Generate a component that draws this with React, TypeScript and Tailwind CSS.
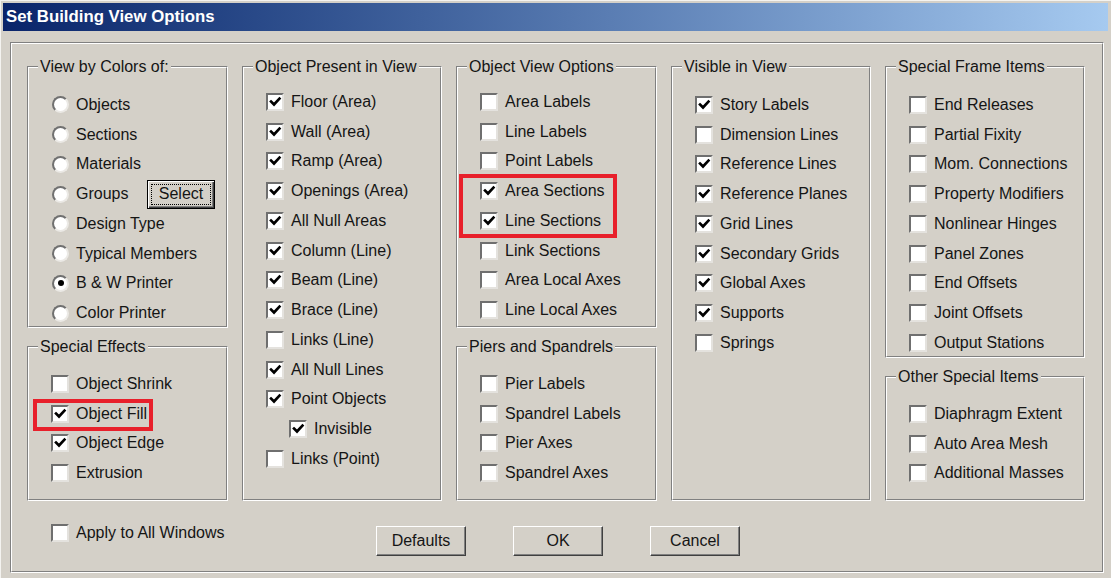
import React from "react";

const FONT = { fontFamily: '"Liberation Sans", Arial, sans-serif' };

function Etched({ className = "", children }: { className?: string; children?: React.ReactNode }) {
  return (
    <div className={`border border-t-[#808080] border-l-[#808080] border-r-white border-b-white ${className}`}>
      <div className="h-full border border-t-white border-l-white border-r-[#808080] border-b-[#808080]">{children}</div>
    </div>
  );
}

function Group({ title, h, pt, children }: { title: string; h: string; pt: string; children?: React.ReactNode }) {
  return (
    <div className={`relative ${h}`}>
      <Etched className="h-full">
        <div className={`flex flex-col ${pt}`}>{children}</div>
      </Etched>
      <span className="absolute -top-[9px] left-[11px] px-[2px] bg-[#d4d0c8] leading-[20px] whitespace-nowrap">{title}</span>
    </div>
  );
}

function Box({ checked }: { checked?: boolean }) {
  return (
    <span className="w-[18px] h-[18px] shrink-0 bg-white border-2 border-t-[#6f6f6f] border-l-[#6f6f6f] border-r-[#e4e2de] border-b-[#e4e2de] flex">
      {checked && (
        <svg viewBox="0 0 14 14" className="w-[14px] h-[14px]">
          <path d="M3 6.5 L6 9.5 L11.5 3.5" fill="none" stroke="#000" strokeWidth="2.6" strokeLinecap="square" />
        </svg>
      )}
    </span>
  );
}

function Check({ label, checked, indent = "pl-[22px]" }: { label: string; checked?: boolean; indent?: string }) {
  return (
    <div className={`h-[29.75px] flex items-center gap-[7px] ${indent}`}>
      <Box checked={checked} />
      <span className="whitespace-nowrap">{label}</span>
    </div>
  );
}

function Radio({ label, checked, children }: { label: string; checked?: boolean; children?: React.ReactNode }) {
  return (
    <div className="h-[29.75px] flex items-center pl-[23px]">
      <span className="w-[17px] h-[17px] shrink-0 rounded-full bg-white border-2 border-t-[#707070] border-l-[#707070] border-r-[#ebe9e5] border-b-[#ebe9e5] flex items-center justify-center">
        {checked && <span className="w-[6px] h-[6px] rounded-full bg-black" />}
      </span>
      <span className={`ml-[7px] whitespace-nowrap ${children ? "w-[71px]" : ""}`}>{label}</span>
      {children}
    </div>
  );
}

function Button({ label }: { label: string }) {
  return (
    <div className="w-[90px] h-[30px] flex items-center justify-center bg-[#d4d0c8] border border-t-white border-l-white border-r-[#404040] border-b-[#404040] shadow-[inset_-1px_-1px_0_#808080]">
      {label}
    </div>
  );
}

export default function App() {
  return (
    <div style={FONT} className="w-[1111px] h-[578px] bg-[#d4d0c8] text-[16px] text-[#151515] relative overflow-hidden border-l border-t border-l-[#f4f3f0] border-t-[#f4f3f0] pl-[2px] pt-[2px] pr-[3px]">
      {/* title bar */}
      <div className="h-[28px] bg-linear-to-r from-[#0a246a] to-[#a6caf0] flex items-center pl-[3px]">
        <span className="text-white font-bold text-[16.8px] leading-none">Set Building View Options</span>
      </div>

      <div className="pt-[11px] pl-[7px] pr-[4px]">
        <Etched className="h-[531px]">
          <div className="pt-[22px] pl-[15px]">
            <div className="grid grid-cols-[201px_200px_201px_200px_200px] gap-x-[14px]">
              {/* column 1 */}
              <div className="flex flex-col gap-[18px]">
                <Group title="View by Colors of:" h="h-[262px]" pt="pt-[22px]">
                  <Radio label="Objects" />
                  <Radio label="Sections" />
                  <Radio label="Materials" />
                  <Radio label="Groups">
                    <div className="w-[68px] h-[29px] border border-black bg-[#d4d0c8] p-[3px] shadow-[inset_1px_1px_0_#fff,inset_-1px_-1px_0_#404040,inset_-2px_-2px_0_#808080]">
                      <div className="w-full h-full border border-dotted border-black flex items-center justify-center">Select</div>
                    </div>
                  </Radio>
                  <Radio label="Design Type" />
                  <Radio label="Typical Members" />
                  <Radio label="B & W Printer" checked />
                  <Radio label="Color Printer" />
                </Group>
                <Group title="Special Effects" h="h-[155px]" pt="pt-[21px]">
                  <Check label="Object Shrink" />
                  <Check label="Object Fill" checked />
                  <Check label="Object Edge" checked />
                  <Check label="Extrusion" />
                </Group>
              </div>

              {/* column 2 */}
              <div className="flex flex-col">
                <Group title="Object Present in View" h="h-[435px]" pt="pt-[19px]">
                  <Check label="Floor (Area)" checked />
                  <Check label="Wall (Area)" checked />
                  <Check label="Ramp (Area)" checked />
                  <Check label="Openings (Area)" checked />
                  <Check label="All Null Areas" checked />
                  <Check label="Column (Line)" checked />
                  <Check label="Beam (Line)" checked />
                  <Check label="Brace (Line)" checked />
                  <Check label="Links (Line)" />
                  <Check label="All Null Lines" checked />
                  <Check label="Point Objects" checked />
                  <Check label="Invisible" checked indent="pl-[45px]" />
                  <Check label="Links (Point)" />
                </Group>
              </div>

              {/* column 3 */}
              <div className="flex flex-col gap-[18px]">
                <Group title="Object View Options" h="h-[262px]" pt="pt-[19px]">
                  <Check label="Area Labels" />
                  <Check label="Line Labels" />
                  <Check label="Point Labels" />
                  <Check label="Area Sections" checked />
                  <Check label="Line Sections" checked />
                  <Check label="Link Sections" />
                  <Check label="Area Local Axes" />
                  <Check label="Line Local Axes" />
                </Group>
                <Group title="Piers and Spandrels" h="h-[155px]" pt="pt-[21px]">
                  <Check label="Pier Labels" />
                  <Check label="Spandrel Labels" />
                  <Check label="Pier Axes" />
                  <Check label="Spandrel Axes" />
                </Group>
              </div>

              {/* column 4 */}
              <div className="flex flex-col">
                <Group title="Visible in View" h="h-[435px]" pt="pt-[22px]">
                  <Check label="Story Labels" checked />
                  <Check label="Dimension Lines" />
                  <Check label="Reference Lines" checked />
                  <Check label="Reference Planes" checked />
                  <Check label="Grid Lines" checked />
                  <Check label="Secondary Grids" checked />
                  <Check label="Global Axes" checked />
                  <Check label="Supports" checked />
                  <Check label="Springs" />
                </Group>
              </div>

              {/* column 5 */}
              <div className="flex flex-col gap-[18px]">
                <Group title="Special Frame Items" h="h-[292px]" pt="pt-[22px]">
                  <Check label="End Releases" />
                  <Check label="Partial Fixity" />
                  <Check label="Mom. Connections" />
                  <Check label="Property Modifiers" />
                  <Check label="Nonlinear Hinges" />
                  <Check label="Panel Zones" />
                  <Check label="End Offsets" />
                  <Check label="Joint Offsets" />
                  <Check label="Output Stations" />
                </Group>
                <Group title="Other Special Items" h="h-[125px]" pt="pt-[21px]">
                  <Check label="Diaphragm Extent" />
                  <Check label="Auto Area Mesh" />
                  <Check label="Additional Masses" />
                </Group>
              </div>
            </div>

            {/* bottom row */}
            <div className="flex items-start">
              <div className="w-[349px] pt-[17px]">
                <Check label="Apply to All Windows" indent="pl-[24px]" />
              </div>
              <div className="flex gap-[47px] pt-[25px]">
                <Button label="Defaults" />
                <Button label="OK" />
                <Button label="Cancel" />
              </div>
            </div>
          </div>
        </Etched>
      </div>

      {/* red annotation boxes */}
      <div className="absolute left-[32px] top-[398px] w-[120px] h-[32px] border-[4px] border-[#e8202b]" />
      <div className="absolute left-[458px] top-[173px] w-[158px] h-[64px] border-[4px] border-[#e8202b]" />
    </div>
  );
}
